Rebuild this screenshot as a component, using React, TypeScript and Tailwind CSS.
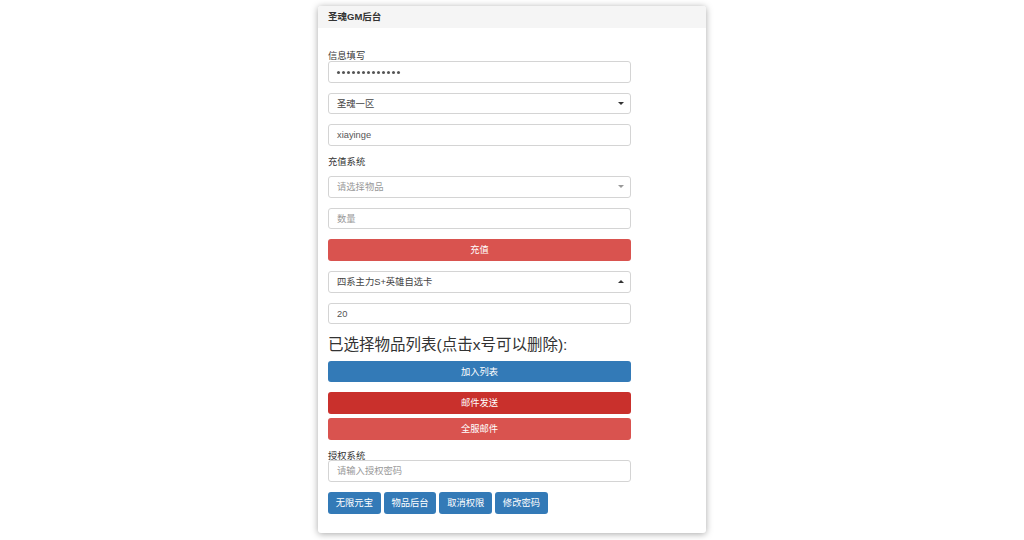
import React from "react";

const font = { fontFamily: '"Liberation Sans", "Noto Sans CJK SC", sans-serif' };

function Caret({ up = false, light = false }: { up?: boolean; light?: boolean }) {
  return (
    <svg width="6" height="3" viewBox="0 0 6 3" className="shrink-0">
      {up ? (
        <polygon points="0,3 6,3 3,0" fill={light ? "#999" : "#333"} />
      ) : (
        <polygon points="0,0 6,0 3,3" fill={light ? "#999" : "#333"} />
      )}
    </svg>
  );
}

function Input({ text, placeholder = false, className = "" }: { text: string; placeholder?: boolean; className?: string }) {
  return (
    <div
      className={`h-[21.5px] w-[303px] rounded-[3px] border border-[#d4d4d4] bg-white px-[8px] pt-[3px] flex items-center text-[9.3px] ${
        placeholder ? "text-[#999]" : "text-[#555]"
      } ${className}`}
    >
      {text}
    </div>
  );
}

function Select({ text, up = false, placeholder = false, className = "" }: { text: string; up?: boolean; placeholder?: boolean; className?: string }) {
  return (
    <div
      className={`h-[21.5px] w-[303px] rounded-[3px] border border-[#d4d4d4] bg-white pl-[8px] pr-[6px] flex items-center justify-between text-[9.3px] ${
        placeholder ? "text-[#999]" : "text-[#444]"
      } ${className}`}
    >
      <span className="pt-[3px]">{text}</span>
      <Caret up={up} light={placeholder} />
    </div>
  );
}

function Btn({ text, color, className = "" }: { text: string; color: string; className?: string }) {
  return (
    <div
      className={`h-[21.5px] w-[303px] rounded-[3px] pt-[3px] flex items-center justify-center text-white text-[9.3px] ${color} ${className}`}
    >
      {text}
    </div>
  );
}

export default function App() {
  return (
    <div className="w-[1024px] h-[540px] bg-white flex justify-center overflow-hidden" style={font}>
      <div className="mt-[6px] w-[388px] h-[527px] rounded-[3px] bg-white shadow-[0_1px_7px_rgba(0,0,0,0.35)] overflow-hidden">
        <div className="h-[22px] bg-[#f5f5f5] px-[10px] pt-[1px] flex items-center text-[9.5px] font-bold text-[#333]">
          圣魂GM后台
        </div>
        <div className="pt-[21px] px-[10px] flex flex-col text-[#333]">
          <div className="h-[12px] leading-[15px] text-[9.3px]">信息填写</div>
          <div className="h-[22px] w-[303px] rounded-[3px] border border-[#d4d4d4] bg-white pl-[8px] flex items-center gap-[2px]">
            {Array.from({ length: 13 }).map((_, i) => (
              <span key={i} className="block w-[3px] h-[3px] rounded-full bg-[#555]" />
            ))}
          </div>
          <Select text="圣魂一区" className="mt-[9.5px]" />
          <Input text="xiayinge" className="mt-[10px]" />
          <div className="mt-[9.5px] mb-[9px] h-[12px] leading-[15px] text-[9.3px]">充值系统</div>
          <Select text="请选择物品" placeholder />
          <Input text="数量" placeholder className="mt-[10px]" />
          <Btn text="充值" color="bg-[#d9534f]" className="mt-[10px]" />
          <Select text="四系主力S+英雄自选卡" up className="mt-[10.5px]" />
          <Input text="20" className="mt-[10px]" />
          <div className="mt-[9.5px] mb-[7px] h-[20px] leading-[21px] text-[15.5px] text-[#333]">
            已选择物品列表(点击x号可以删除):
          </div>
          <Btn text="加入列表" color="bg-[#337ab7]" />
          <Btn text="邮件发送" color="bg-[#c9302c]" className="mt-[10px]" />
          <Btn text="全服邮件" color="bg-[#d9534f]" className="mt-[4.5px]" />
          <div className="mt-[10.5px] h-[10px] leading-[12px] text-[9.3px]">授权系统</div>
          <Input text="请输入授权密码" placeholder />
          <div className="mt-[10.5px] flex gap-[3px]">
            {["无限元宝", "物品后台", "取消权限", "修改密码"].map((t) => (
              <div
                key={t}
                className="h-[21.5px] px-[7.75px] pt-[3px] rounded-[3px] bg-[#337ab7] text-white text-[9.3px] flex items-center"
              >
                {t}
              </div>
            ))}
          </div>
        </div>
      </div>
    </div>
  );
}
